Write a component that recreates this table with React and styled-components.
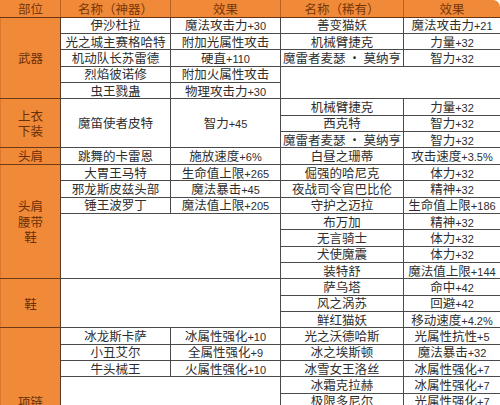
import React from 'react';
import styled, { createGlobalStyle } from 'styled-components';

const Global = createGlobalStyle`
  html, body {
    margin: 0;
    padding: 0;
    background: #ffffff;
    overflow: hidden;
  }
`;

const ORANGE = '#f08a38';

const Frame = styled.div`
  width: 500px;
  border-top-right-radius: 7px;
  overflow: hidden;
`;

const Table = styled.table`
  width: 500px;
  border-collapse: collapse;
  table-layout: fixed;
  font-family: "Noto Sans CJK SC", "Noto Sans", sans-serif;
  font-size: 12.5px;
  color: #2e2e2e;
`;

const Row = styled.tr`
  height: ${p => (p.$head ? '16.6px' : '16.35px')};
`;

const HeadCell = styled.th`
  background: ${ORANGE};
  color: #7a3608;
  font-weight: 400;
  border: 1px solid #b9621f;
  border-top-color: ${ORANGE};
  border-bottom-color: #6e3410;
  padding: 0;
  line-height: 14px;
  white-space: nowrap;
  &:first-child {
    border-left-color: ${ORANGE};
  }
`;

const PartCell = styled.td`
  background: ${ORANGE};
  color: #6c2e06;
  text-align: center;
  vertical-align: middle;
  border: 1px solid #6e3a18;
  border-left-color: #d9772c;
  border-right-color: #5a3a25;
  padding: 0;
  line-height: 15.5px;
`;

const PartLine = styled.div`
  display: block;
`;

const Cell = styled.td`
  text-align: center;
  vertical-align: middle;
  border: 1px solid #4a4a4a;
  border-top-color: ${p => (p.$top ? '#383838' : '#4a4a4a')};
  padding: 0;
  line-height: 14px;
  white-space: nowrap;
`;

const Num = styled.span`
  font-family: "Liberation Sans", Arial, sans-serif;
  font-size: 11px;
  line-height: 11px;
`;

function Txt({ s }) {
  if (!s) return null;
  return s.split(/([+\d.%]+)/).map((part, i) =>
    /^[+\d.%]+$/.test(part) ? <Num key={i}>{part}</Num> : <React.Fragment key={i}>{part}</React.Fragment>
  );
}

// l / r: [name, effect]; lSpan: merged left pair; lEmpty / rEmpty: blank merged block
const sections = [
  {
    part: ['武器'],
    rows: [
      { l: ['伊沙杜拉', '魔法攻击力+30'], r: ['善变猫妖', '魔法攻击力+21'] },
      { l: ['光之城主赛格哈特', '附加光属性攻击'], r: ['机械臂捷克', '力量+32'] },
      { l: ['机动队长苏雷德', '硬直+110'], r: ['魔雷者麦瑟 · 莫纳亨', '智力+32'] },
      { l: ['烈焰彼诺修', '附加火属性攻击'], rEmpty: 2 },
      { l: ['虫王戮蛊', '物理攻击力+30'] },
    ],
  },
  {
    part: ['上衣', '下装'],
    rows: [
      { lSpan: ['魔笛使者皮特', '智力+45', 3], r: ['机械臂捷克', '力量+32'] },
      { r: ['西克特', '智力+32'] },
      { r: ['魔雷者麦瑟 · 莫纳亨', '智力+32'] },
    ],
  },
  {
    part: ['头肩'],
    rows: [{ l: ['跳舞的卡雷恩', '施放速度+6%'], r: ['白昼之珊蒂', '攻击速度+3.5%'] }],
  },
  {
    part: ['头肩', '腰带', '鞋'],
    rows: [
      { l: ['大胃王马特', '生命值上限+265'], r: ['倔强的哈尼克', '体力+32'] },
      { l: ['邪龙斯皮兹头部', '魔法暴击+45'], r: ['夜战司令官巴比伦', '精神+32'] },
      { l: ['锤王波罗丁', '魔法值上限+205'], r: ['守护之迈拉', '生命值上限+186'] },
      { lEmpty: 4, r: ['布万加', '精神+32'] },
      { r: ['无言骑士', '体力+32'] },
      { r: ['犬使魔震', '体力+32'] },
      { r: ['装特舒', '魔法值上限+144'] },
    ],
  },
  {
    part: ['鞋'],
    rows: [
      { lEmpty: 3, r: ['萨乌塔', '命中+42'] },
      { r: ['风之涡苏', '回避+42'] },
      { r: ['鲜红猫妖', '移动速度+4.2%'] },
    ],
  },
  {
    part: ['项链'],
    rows: [
      { l: ['冰龙斯卡萨', '冰属性强化+10'], r: ['光之沃德哈斯', '光属性抗性+5'] },
      { l: ['小丑艾尔', '全属性强化+9'], r: ['冰之埃斯顿', '魔法暴击+32'] },
      { l: ['牛头械王', '火属性强化+10'], r: ['冰雪女王洛丝', '冰属性强化+7'] },
      { lEmpty: 6, r: ['冰霜克拉赫', '冰属性强化+7'] },
      { r: ['极限多尼尔', '光属性强化+7'] },
      { r: ['', ''] },
      { r: ['', ''] },
      { r: ['', ''] },
      { r: ['', ''] },
    ],
  },
];

export default function App() {
  return (
    <Frame>
      <Global />
      <Table>
        <colgroup>
          <col style={{ width: 60 }} />
          <col style={{ width: 110 }} />
          <col style={{ width: 110 }} />
          <col style={{ width: 123 }} />
          <col style={{ width: 97 }} />
        </colgroup>
        <thead>
          <Row $head>
            <HeadCell>部位</HeadCell>
            <HeadCell>名称（神器）</HeadCell>
            <HeadCell>效果</HeadCell>
            <HeadCell>名称（稀有）</HeadCell>
            <HeadCell>效果</HeadCell>
          </Row>
        </thead>
        <tbody>
          {sections.map((sec, si) =>
            sec.rows.map((row, ri) => (
              <Row key={`${si}-${ri}`}>
                {ri === 0 && (
                  <PartCell rowSpan={sec.rows.length}>
                    {sec.part.map((p, i) => (
                      <PartLine key={i}>{p}</PartLine>
                    ))}
                  </PartCell>
                )}
                {row.l && (
                  <>
                    <Cell $top={ri === 0}><Txt s={row.l[0]} /></Cell>
                    <Cell $top={ri === 0}><Txt s={row.l[1]} /></Cell>
                  </>
                )}
                {row.lSpan && (
                  <>
                    <Cell rowSpan={row.lSpan[2]}><Txt s={row.lSpan[0]} /></Cell>
                    <Cell rowSpan={row.lSpan[2]}><Txt s={row.lSpan[1]} /></Cell>
                  </>
                )}
                {row.lEmpty && <Cell colSpan={2} rowSpan={row.lEmpty} />}
                {row.r && (
                  <>
                    <Cell $top={ri === 0}><Txt s={row.r[0]} /></Cell>
                    <Cell $top={ri === 0}><Txt s={row.r[1]} /></Cell>
                  </>
                )}
                {row.rEmpty && <Cell colSpan={2} rowSpan={row.rEmpty} />}
              </Row>
            ))
          )}
        </tbody>
      </Table>
    </Frame>
  );
}
